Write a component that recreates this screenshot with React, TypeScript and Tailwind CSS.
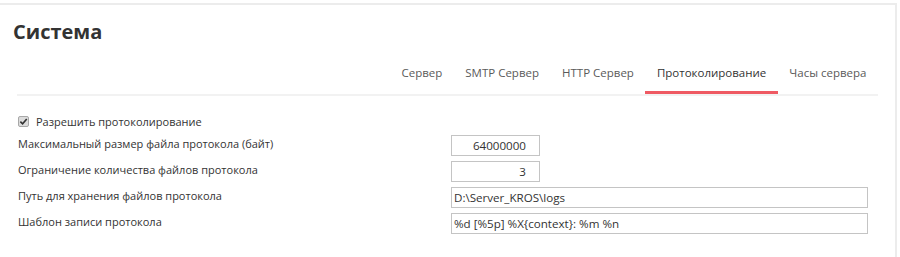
import React from "react";

const tabs = ["Сервер", "SMTP Сервер", "HTTP Сервер", "Протоколирование", "Часы сервера"];

function Row({ label, value, wide }: { label: string; value: string; wide?: boolean }) {
  return (
    <div className="flex items-start h-[21px]">
      <div className="w-[433px] text-[11px] leading-[17px] text-[#333]">{label}</div>
      <div
        className={
          "h-[21px] border border-[#c4c4c4] bg-white text-[11.6px] leading-[19px] text-[#333] " +
          (wide ? "w-[417px] pl-[2px]" : "w-[89px] text-right pr-[13px]")
        }
      >
        {value}
      </div>
    </div>
  );
}

export default function App() {
  return (
    <div className="w-[900px] h-[257px] bg-white pt-[3px]" style={{ fontFamily: '"Open Sans", "Liberation Sans", sans-serif' }}>
      <div className="w-[897px] h-[254px] border-t-2 border-r-2 border-[#ececec] pt-[13px]">
        <div className="pl-[13px] text-[20px] leading-[28px] font-bold text-[#333]">Система</div>
        <div className="mt-[18px] ml-[17px] mr-[17px] border-b-2 border-[#f2f2f2] flex justify-end">
          {tabs.map((t) => (
            <div
              key={t}
              className={
                "px-[11.5px] pb-[9px] text-[11.5px] leading-[18px] border-b-[3px] " +
                (t === "Протоколирование" ? "border-[#ef5a63] text-[#333]" : "border-transparent text-[#5a5a5a]")
              }
            >
              {t}
            </div>
          ))}
        </div>
        <div className="pl-[18px] pt-[17px] flex flex-col gap-[5px]">
          <div className="flex items-center h-[17px]">
            <span className="w-[11px] h-[11px] rounded-[2px] border border-[#a8a8a8] bg-[#dcdcdc] flex items-center justify-center">
              <svg width="9" height="9" viewBox="0 0 10 10">
                <path d="M1.5 5.2 L4 7.6 L8.6 2.2" fill="none" stroke="#333" strokeWidth="1.8" />
              </svg>
            </span>
            <span className="ml-[7px] text-[11px] leading-[17px] text-[#333]">Разрешить протоколирование</span>
          </div>
          <Row label="Максимальный размер файла протокола (байт)" value="64000000" />
          <Row label="Ограничение количества файлов протокола" value="3" />
          <Row label="Путь для хранения файлов протокола" value="D:\Server_KROS\logs" wide />
          <Row label="Шаблон записи протокола" value="%d [%5p] %X{context}: %m %n" wide />
        </div>
      </div>
    </div>
  );
}
